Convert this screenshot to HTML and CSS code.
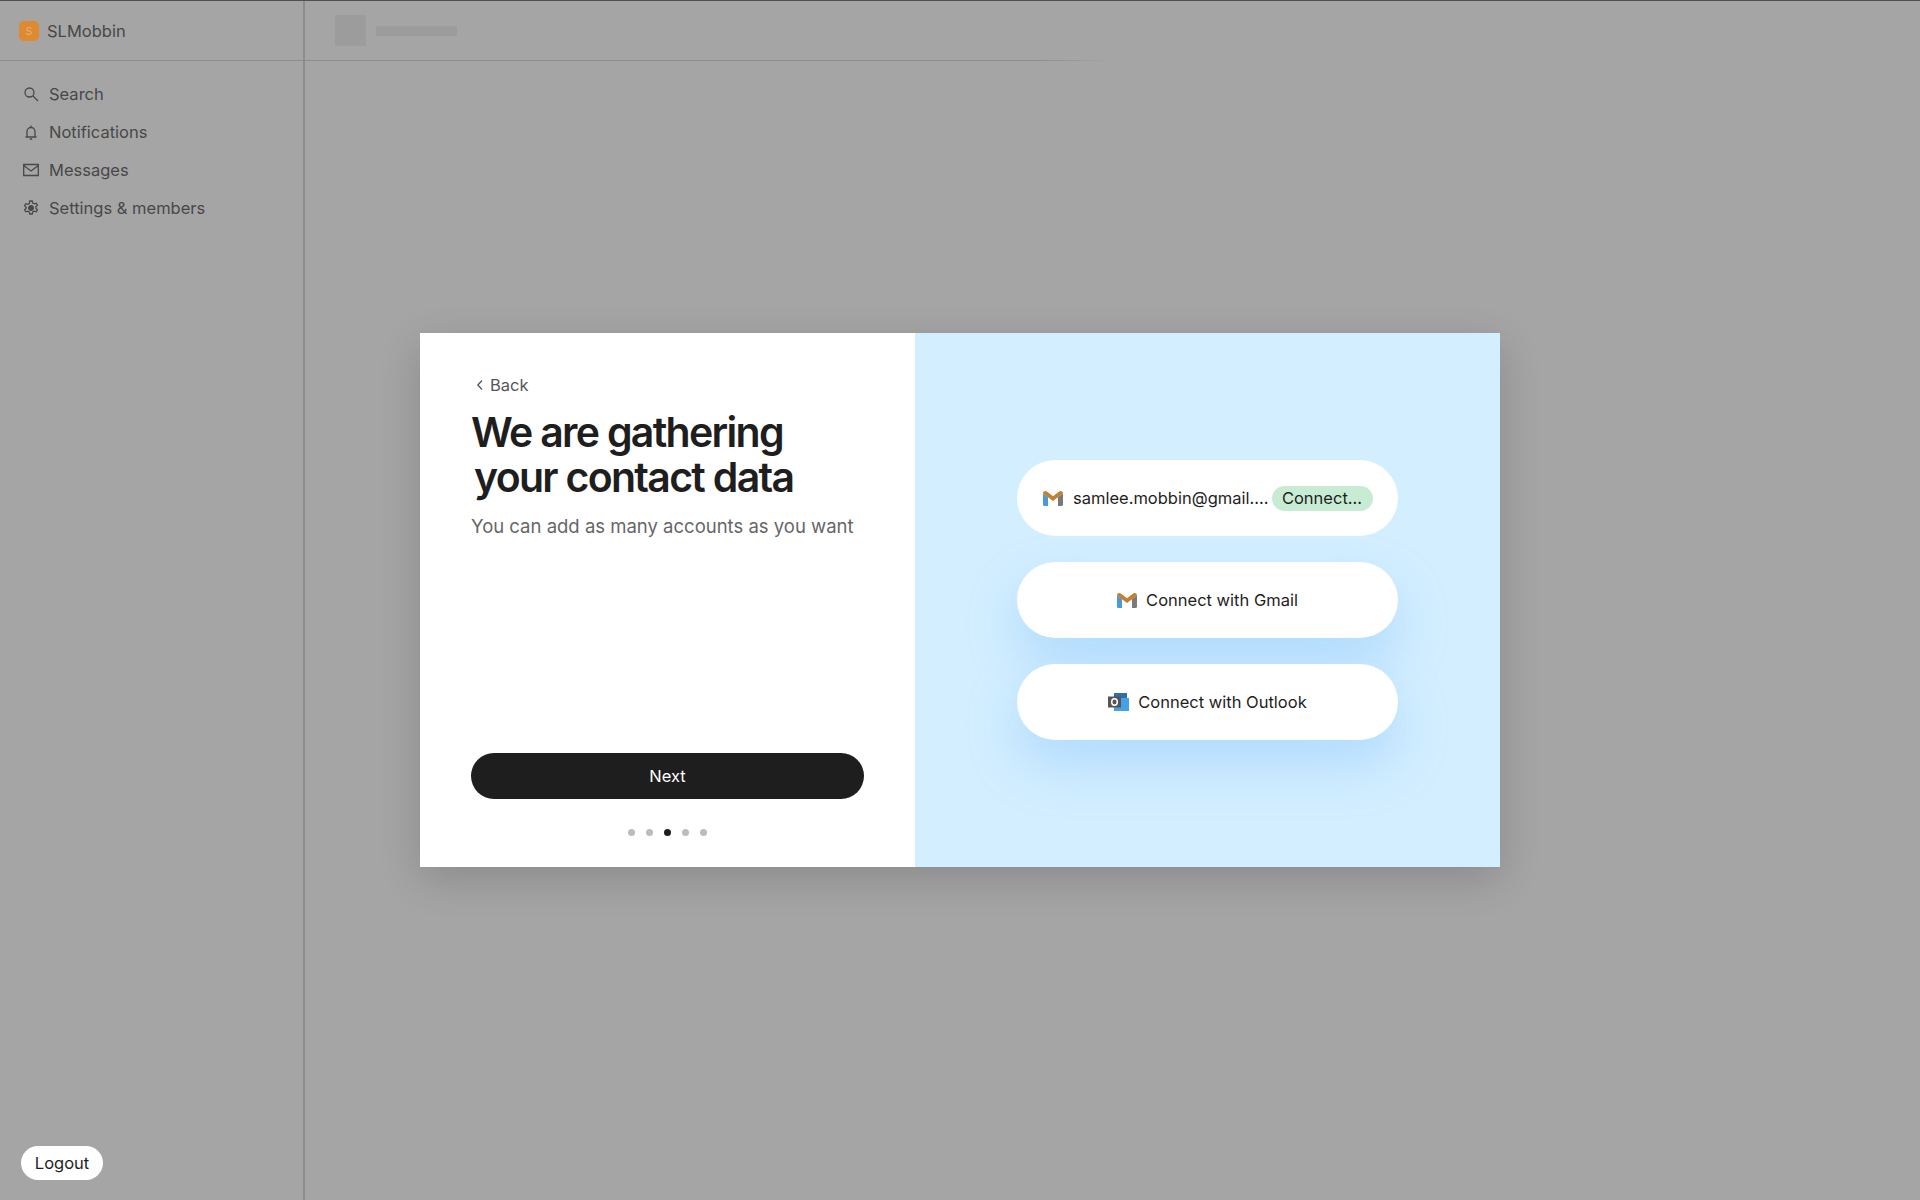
FILE: index.html
```html
<!DOCTYPE html>
<html lang="en">
<head>
    <title>SLMobbin</title>
    <link rel="stylesheet" href="styles.css">
</head>
<body>

<div class="app">
    <aside class="sidebar">
        <div class="brand">
            <span class="brand-logo">S</span>
            <span>SLMobbin</span>
        </div>
        <ul class="nav">
            <li>
                <svg class="nav-icon" viewBox="0 0 16 16"><circle cx="6.5" cy="6.5" r="4.5"/><path d="M10 10l5 5"/></svg>
                Search
            </li>
            <li>
                <svg class="nav-icon" viewBox="0 0 16 16"><path d="M2.5 13h11M4 13V7.5a4 4 0 0 1 8 0V13M8 3.500V1.500M6.800 15h2.400"/></svg>
                Notifications
            </li>
            <li>
                <svg class="nav-icon" viewBox="0 0 16 16"><path d="M.7 2.500h14.600v11H.7zM.7 3.500L8 9l7.300-5.500"/></svg>
                Messages
            </li>
            <li>
                <svg class="nav-icon" viewBox="0 0 16 16"><path d="M6.800 1h2.400l.5 2 1.500.8 2-.6 1.200 2-1.500 1.500v1.600l1.500 1.500-1.200 2-2-.6-1.500.8-.5 2H6.800l-.5-2-1.500-.8-2 .6-1.200-2 1.500-1.500V7.200L1.600 5.700l1.200-2 2 .6 1.500-.8z"/><circle class="gear-hub" cx="8" cy="8" r="2.300"/></svg>
                Settings &amp; members
            </li>
        </ul>
        <button class="logout" type="button">Logout</button>
    </aside>

    <main class="main">
        <div class="topbar">
            <div class="thumb"></div>
            <div class="title-bar"></div>
        </div>
    </main>
</div>

<div class="overlay">
    <div class="modal">
        <section class="modal-left">
            <div class="back">
                <svg class="back-icon" viewBox="0 0 8 12"><path d="M6 1.500L1.800 6 6 10.500"/></svg>
                Back
            </div>
            <h1>We are gathering<br><span class="second-line">your contact data</span></h1>
            <p class="subtitle">You can add as many accounts as you want</p>
            <button class="next" type="button">Next</button>
            <div class="dots">
                <span class="dot"></span>
                <span class="dot"></span>
                <span class="dot active"></span>
                <span class="dot"></span>
                <span class="dot"></span>
            </div>
        </section>

        <section class="modal-right">
            <div class="pill connected">
                <svg class="mail-icon" viewBox="0 0 20 15"><path fill="#4a9ad9" d="M0 2.500L5 6v9H1.500A1.500 1.500 0 0 1 0 13.500z"/><path fill="#7a7a7a" d="M20 2.500L15 6v9h3.500a1.500 1.500 0 0 0 1.500-1.500z"/><path fill="#c47f32" d="M0 2.500A2.400 2.400 0 0 1 3.800.5L10 5.200 16.200.5A2.400 2.400 0 0 1 20 2.500L10 10z"/></svg>
                <span class="account">samlee.mobbin@gmail....</span>
                <span class="badge">Connect...</span>
            </div>
            <div class="pill">
                <svg class="mail-icon" viewBox="0 0 20 15"><path fill="#4a9ad9" d="M0 2.500L5 6v9H1.500A1.500 1.500 0 0 1 0 13.500z"/><path fill="#7a7a7a" d="M20 2.500L15 6v9h3.500a1.500 1.500 0 0 0 1.500-1.500z"/><path fill="#c47f32" d="M0 2.500A2.400 2.400 0 0 1 3.800.5L10 5.200 16.200.5A2.400 2.400 0 0 1 20 2.500L10 10z"/></svg>
                Connect with Gmail
            </div>
            <div class="pill">
                <svg class="outlook-icon" viewBox="0 0 21 18"><path fill="#2f6ea8" d="M6 0h13v6H6z"/><path fill="#45a0e6" d="M6 5h15v13H6z"/><path fill="#555" d="M0 3.500h13v11H0z"/><ellipse cx="6.500" cy="9" rx="2.800" ry="3.200" fill="none" stroke="#fff" stroke-width="1.500"/></svg>
                Connect with Outlook
            </div>
        </section>
    </div>
</div>

</body>
</html>
```
FILE: styles.css
```css
* {
  box-sizing: border-box;
}
body {
  margin: 0;
  height: 1200px;
  overflow: hidden;
  background-color: #a5a5a5;
  font-family: "Inter", "Liberation Sans", sans-serif;
  color: #484848;
}
.app {
  display: flex;
  height: 100%;
  border-top: 1px solid #505050;
}
.sidebar {
  display: flex;
  flex-direction: column;
  width: 305px;
  border-right: 2px solid #8c8c8c;
}
.brand {
  display: flex;
  align-items: center;
  gap: 8px;
  height: 60px;
  padding-left: 19px;
  border-bottom: 1px solid #8c8c8c;
  font-size: 16.500px;
}
.brand-logo {
  display: flex;
  justify-content: center;
  align-items: center;
  width: 20px;
  height: 20px;
  border-radius: 5px;
  background-color: #de8a30;
  color: #e8b27c;
  font-size: 10px;
}
.nav {
  list-style: none;
  margin: 14px 0 0;
  padding: 0 0 0 23px;
  font-size: 16.500px;
}
.nav li {
  display: flex;
  align-items: center;
  gap: 10px;
  height: 38px;
}
.nav-icon {
  width: 16px;
  height: 16px;
  fill: none;
  stroke: #484848;
  stroke-width: 1.300;
}
.gear-hub {
  fill: #484848;
}
.logout {
  margin: auto 0 20px 21px;
  width: 82px;
  height: 34px;
  padding: 0;
  border: none;
  border-radius: 17px;
  background-color: white;
  color: #1e1e1e;
  font-family: inherit;
  font-size: 16.500px;
}
.main {
  flex: 1;
}
.topbar {
  display: flex;
  align-items: center;
  gap: 10px;
  height: 60px;
  padding-left: 30px;
  border-bottom: 1px solid transparent;
  border-image: linear-gradient(to right, #8c8c8c, #8c8c8c 45%, #a5a5a5 50%) 1;
}
.thumb {
  width: 31px;
  height: 31px;
  background-color: #9c9c9c;
}
.title-bar {
  width: 81px;
  height: 10px;
  background-color: #9c9c9c;
}

.overlay {
  position: fixed;
  top: 0;
  left: 0;
  width: 100%;
  height: 100%;
  display: flex;
  justify-content: center;
  align-items: center;
}
.modal {
  display: flex;
  width: 1080px;
  height: 534px;
  box-shadow: 0 12px 40px rgba(0, 0, 0, 0.16);
}
.modal-left {
  display: flex;
  flex-direction: column;
  width: 495px;
  padding: 40px 51px 0;
  background-color: white;
}
.back {
  display: flex;
  align-items: center;
  gap: 6px;
  padding-left: 5px;
  color: #555;
  font-size: 16.500px;
  line-height: 24px;
}
.back-icon {
  width: 8px;
  height: 12px;
  fill: none;
  stroke: #555;
  stroke-width: 1.300;
}
h1 {
  margin: 13px 0 0;
  color: #1e1e1e;
  font-size: 41px;
  font-weight: 600;
  line-height: 45px;
  letter-spacing: -1.700px;
}
.second-line {
  margin-left: 3px;
}
.subtitle {
  margin: 12px 0 0;
  color: #666;
  font-size: 18.500px;
  line-height: 28px;
}
.next {
  margin-top: auto;
  height: 46px;
  padding: 0;
  border: none;
  border-radius: 23px;
  background-color: #1e1e1e;
  color: white;
  font-family: inherit;
  font-size: 16.500px;
}
.dots {
  display: flex;
  justify-content: center;
  gap: 11px;
  margin: 30px 0 31px;
}
.dot {
  width: 7px;
  height: 7px;
  border-radius: 50%;
  background-color: #bcbcbc;
}
.dot.active {
  background-color: #1e1e1e;
}
.modal-right {
  flex: 1;
  display: flex;
  flex-direction: column;
  justify-content: center;
  align-items: center;
  gap: 26px;
  background-color: #d3eeff;
}
.pill {
  position: relative;
  display: flex;
  justify-content: center;
  align-items: center;
  gap: 9px;
  width: 381px;
  height: 76px;
  border-radius: 38px;
  background-color: white;
  color: #1e1e1e;
  font-size: 16.500px;
  box-shadow: 0 24px 50px rgba(120, 190, 250, 0.38);
}
.pill.connected {
  justify-content: flex-start;
  padding-left: 26px;
  box-shadow: none;
}
.mail-icon {
  width: 20px;
  height: 15px;
}
.outlook-icon {
  width: 21px;
  height: 18px;
}
.account {
  margin-left: 1px;
}
.badge {
  display: flex;
  justify-content: center;
  align-items: center;
  margin-left: -6px;
  width: 101px;
  height: 25px;
  border-radius: 13px;
  background-color: #c8ebd4;
}
```
